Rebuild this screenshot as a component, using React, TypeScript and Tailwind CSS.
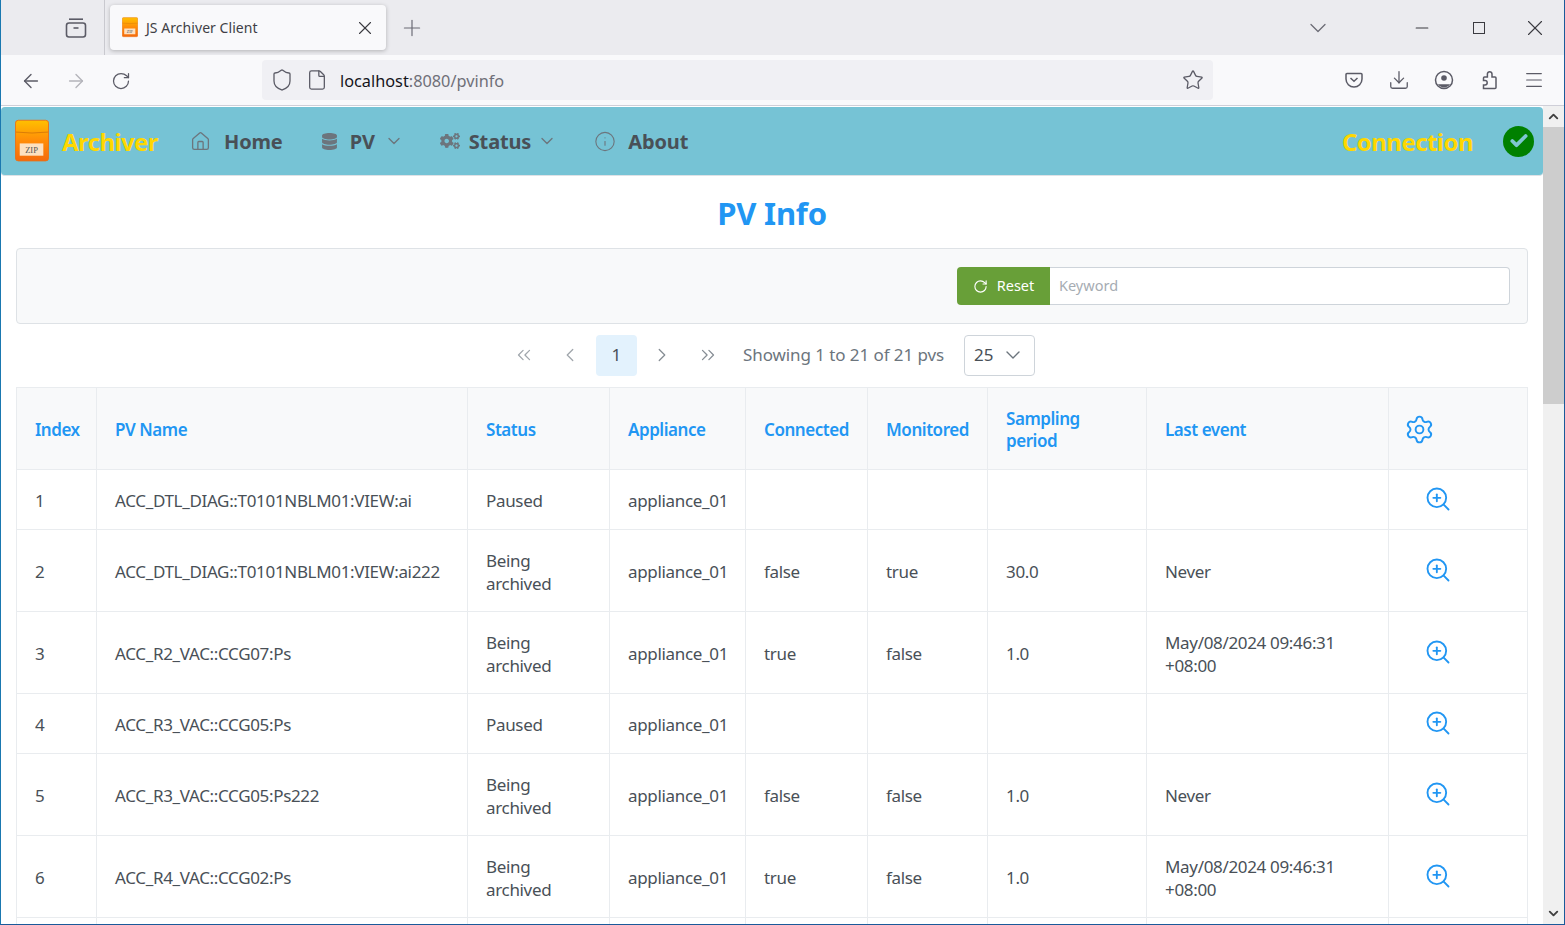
import React from "react";
import { ArrowLeft, ArrowRight, RotateCw, Shield, File, Star, Download, Menu, X, Plus, ChevronDown, Minus, ChevronsLeft, ChevronLeft, ChevronRight, ChevronsRight, Settings, ZoomIn, Home, Info, Check, ChevronUp } from "lucide-react";
import { FaCogs, FaDatabase } from "react-icons/fa";

function Logo({ size }: { size: number }) {
  return (
    <svg width={size} height={size * 1.27} viewBox="0 0 36 44">
      <defs>
        <linearGradient id={"g" + size} x1="0" y1="0" x2="0" y2="1">
          <stop offset="0" stopColor="#ffc000" />
          <stop offset="0.5" stopColor="#ff8c08" />
          <stop offset="1" stopColor="#f46a0c" />
        </linearGradient>
      </defs>
      <rect x="0.5" y="0.5" width="35" height="43" rx="3" fill={"url(#g" + size + ")"} stroke="#e8731a" />
      <path d="M1 13 Q18 15 35 13" stroke="#d87a08" fill="none" />
      <rect x="5" y="25" width="25" height="13" fill="#fde0c0" />
      <text x="17.5" y="35" textAnchor="middle" fontSize="9" fontFamily="Liberation Serif, serif" fill="#555">ZIP</text>
    </svg>
  );
}

const rows = [
  ["1", "ACC_DTL_DIAG::T0101NBLM01:VIEW:ai", "Paused", "appliance_01", "", "", "", ""],
  ["2", "ACC_DTL_DIAG::T0101NBLM01:VIEW:ai222", "Being archived", "appliance_01", "false", "true", "30.0", "Never"],
  ["3", "ACC_R2_VAC::CCG07:Ps", "Being archived", "appliance_01", "true", "false", "1.0", "May/08/2024 09:46:31 +08:00"],
  ["4", "ACC_R3_VAC::CCG05:Ps", "Paused", "appliance_01", "", "", "", ""],
  ["5", "ACC_R3_VAC::CCG05:Ps222", "Being archived", "appliance_01", "false", "false", "1.0", "Never"],
  ["6", "ACC_R4_VAC::CCG02:Ps", "Being archived", "appliance_01", "true", "false", "1.0", "May/08/2024 09:46:31 +08:00"],
];

const heads = ["Index", "PV Name", "Status", "Appliance", "Connected", "Monitored", "Sampling period", "Last event"];
const widths = [80, 371, 142, 136, 122, 120, 159, 242, 139];

function NavItem({ icon, label, caret, gap, textGap }: { icon: React.ReactNode; label: string; caret?: string; gap: string; textGap: string }) {
  return (
    <div className={"flex items-center text-[#495057] " + gap}>
      <span className="text-[#6c757d] flex w-[22px] justify-center">{icon}</span>
      <span className={"text-[20px] font-bold leading-none tracking-[-0.15px] translate-y-[1px] " + textGap}>{label}</span>
      {caret && <ChevronDown size={20} strokeWidth={1.6} className={"text-[#6c757d] " + caret} />}
    </div>
  );
}

export default function App() {
  return (
    <div className="w-[1565px] h-[925px] overflow-hidden flex flex-col border-l border-l-[#1a78b0] border-r border-r-[#1a5a9a] border-b border-b-[#1a5a9a] bg-white text-[#495057] font-['Noto_Sans','Open_Sans',sans-serif]">
      <div className="h-[55px] bg-[#ebebef] flex items-center shrink-0">
        <div className="w-[104px] h-full flex items-center justify-end pr-[17px] border-r border-r-[#c9c9cf]">
          <svg width="22" height="20" viewBox="0 0 22 20" fill="none" stroke="#5b5b66" strokeWidth="1.6">
            <path d="M4 1.2h14" />
            <rect x="1.5" y="5" width="19" height="14" rx="2.5" />
            <path d="M8.5 10h5" />
          </svg>
        </div>
        <div className="ml-[5px] w-[276px] h-[45px] bg-[#f9f9fb] rounded-[4px] shadow-[0_1px_4px_rgba(0,0,0,0.25)] flex items-center pl-[12px] pr-[10px]">
          <Logo size={16} />
          <span className="ml-[8px] text-[14px] text-[#3f3f46] flex-1 tracking-[0.05px]">JS Archiver Client</span>
          <X size={22} strokeWidth={1.2} className="text-[#3a3a40]" />
        </div>
        <Plus size={26} strokeWidth={1.1} className="ml-[13px] text-[#6b6b75]" />
        <div className="flex-1" />
        <ChevronDown size={28} strokeWidth={1.1} className="text-[#6b6b75] mr-[80px]" />
        <Minus size={20} strokeWidth={1.3} className="text-[#3a3a40] mr-[41px]" />
        <div className="w-[12px] h-[12px] border border-[#3a3a40] mr-[37px]" />
        <X size={26} strokeWidth={1} className="text-[#3a3a40] mr-[16px]" />
      </div>
      <div className="h-[51px] bg-[#f9f9fb] border-b border-b-[#cfcfd8] flex items-center shrink-0 text-[#5b5b66]">
        <ArrowLeft size={22} strokeWidth={1.5} className="ml-[19px] translate-y-[1px]" />
        <ArrowRight size={22} strokeWidth={1.5} className="ml-[23px] text-[#b4b4ba] translate-y-[1px]" />
        <RotateCw size={20} strokeWidth={1.5} className="ml-[24px] translate-y-[1px]" />
        <div className="ml-[131px] w-[951px] h-[40px] bg-[#f0f0f4] rounded-[4px] flex items-center pl-[8px] pr-[8px]">
          <Shield size={24} strokeWidth={1.3} />
          <File size={22} strokeWidth={1.4} className="ml-[12px]" />
          <span className="ml-[12px] text-[16.3px] text-[#15141a] translate-y-[1px]">localhost<span className="text-[#6f6f78]">:8080/pvinfo</span></span>
          <div className="flex-1" />
          <Star size={22} strokeWidth={1.4} className="mr-[1px]" />
        </div>
        <svg className="ml-[131px]" width="20" height="20" viewBox="0 0 20 20" fill="none" stroke="currentColor" strokeWidth="1.5"><path d="M3 3.5h14a1 1 0 0 1 1 1V9a8 8 0 0 1-16 0V4.5a1 1 0 0 1 1-1z" /><path d="M6.5 8 10 11.2 13.5 8" /></svg>
        <Download size={22} strokeWidth={1.4} className="ml-[24px]" />
        <svg className="ml-[24px]" width="20" height="20" viewBox="0 0 20 20" fill="none" stroke="currentColor" strokeWidth="1.5">
          <circle cx="10" cy="10" r="8.5" />
          <circle cx="10" cy="8" r="2.8" fill="currentColor" stroke="none" />
          <path d="M3.8 14.2h12.4a7.6 7.6 0 0 1-12.4 0z" fill="currentColor" stroke="none" />
        </svg>
        <svg className="ml-[26px]" width="20" height="20" viewBox="0 0 20 20" fill="none" stroke="currentColor" strokeWidth="1.5">
          <path d="M3.5 18.5H15a1 1 0 0 0 1-1V8a1 1 0 0 0-1-1h-3V4a2.3 2.3 0 0 0-4.6 0v3H4.5a1 1 0 0 0-1 1v2.5H5a2.2 2.2 0 0 1 0 4.4H3.5z" />
        </svg>
        <Menu size={22} strokeWidth={1.3} className="ml-[23px]" />
      </div>
      <div className="flex-1 min-h-0 flex">
        <div className="flex-1 min-w-0 overflow-hidden">
          <div className="h-[69px] mt-[1px] bg-[#76c3d5] rounded-[4px] border-b border-b-[#dee2e6] flex items-center pl-[14px] pr-[9px]">
            <Logo size={34} />
            <span className="ml-[13px] text-[24px] font-bold text-[#ffd700] tracking-[-0.6px] translate-y-[1px]">Archiver</span>
            <NavItem gap="ml-[32px]" textGap="ml-[12px]" icon={<Home size={21} strokeWidth={1.5} />} label="Home" />
            <NavItem gap="ml-[36px]" textGap="ml-[9px]" caret="ml-[9px]" icon={<FaDatabase size={17} />} label="PV" />
            <NavItem gap="ml-[35px]" textGap="ml-[8px]" caret="ml-[6px]" icon={<FaCogs size={20} />} label="Status" />
            <NavItem gap="ml-[37px]" textGap="ml-[12px]" icon={<Info size={25} strokeWidth={1.2} />} label="About" />
            <div className="flex-1" />
            <span className="text-[24px] font-bold text-[#ffd700] tracking-[-0.55px] translate-y-[1px]">Connection</span>
            <span className="ml-[30px] w-[31px] h-[31px] rounded-full bg-[#008000] flex items-center justify-center">
              <Check size={20} strokeWidth={4.5} className="text-[#7fc6d0]" />
            </span>
          </div>
          <h1 className="text-[31px] font-bold text-[#2196f3] text-center leading-none mt-[22px] mb-[19px] tracking-[-0.2px]">PV Info</h1>
          <div className="mx-[15px] h-[76px] bg-[#f8f9fa] border border-[#dee2e6] rounded-[4px] flex items-center justify-end pr-[17px]">
            <button className="w-[93px] h-[38px] bg-[#689f38] text-white rounded-l-[4px] flex items-center justify-center text-[14.5px] gap-[9px]">
              <RotateCw size={15} strokeWidth={1.8} />
              Reset
            </button>
            <div className="w-[460px] h-[38px] bg-white border border-[#ced4da] border-l-0 rounded-r-[4px] flex items-center pl-[9px] text-[14.5px] text-[#a6acb3]">Keyword</div>
          </div>
          <div className="h-[63px] flex items-center justify-center pl-[4px] pb-[1px]">
            <ChevronsLeft size={22} strokeWidth={1.4} className="text-[#a0a6ac]" />
            <ChevronLeft size={22} strokeWidth={1.4} className="text-[#a0a6ac] ml-[24px]" />
            <div className="ml-[15px] w-[41px] h-[41px] rounded-[4px] bg-[#e3f2fd] flex items-center justify-center text-[17px]">1</div>
            <ChevronRight size={22} strokeWidth={1.4} className="text-[#868d94] ml-[14px]" />
            <ChevronsRight size={22} strokeWidth={1.4} className="text-[#868d94] ml-[24px]" />
            <span className="ml-[24px] text-[17px] text-[#6c757d] tracking-[-0.08px]">Showing 1 to 21 of 21 pvs</span>
            <div className="ml-[20px] w-[71px] h-[41px] border border-[#ced4da] rounded-[4px] flex items-center pl-[9px] text-[17px]">
              25
              <ChevronDown size={24} strokeWidth={1.4} className="ml-[7px] text-[#6c757d]" />
            </div>
          </div>
          <div className="mx-[15px]">
            <table className="w-[1511px] table-fixed border-collapse text-[17px] leading-[23px] tracking-[-0.33px]">
              <colgroup>
                {widths.map((w, i) => (
                  <col key={i} style={{ width: w }} />
                ))}
              </colgroup>
              <thead>
                <tr className="h-[82px] bg-[#f8f9fa]">
                  {heads.map((h, i) => (
                    <th key={i} className="border border-[#e9ecef] px-[18px] text-left align-middle font-semibold text-[#2196f3] leading-[22px] tracking-[-0.45px]">
                      <span className="relative top-[1px]">{h}</span>
                    </th>
                  ))}
                  <th className="border border-[#e9ecef] pl-[15px] text-left align-middle">
                    <Settings size={31} strokeWidth={1.5} className="text-[#2196f3] mt-[1px]" />
                  </th>
                </tr>
              </thead>
              <tbody>
                {rows.map((r) => (
                  <tr key={r[0]} className={r[4] ? "h-[82px]" : "h-[60px]"}>
                    {r.map((c, i) => (
                      <td key={i} className="border border-[#e9ecef] px-[18px] align-middle">
                        <span className="relative top-[1px]">{c}</span>
                      </td>
                    ))}
                    <td className="border border-[#e9ecef] pl-[35px] align-middle">
                      <ZoomIn size={28} strokeWidth={1.6} className="text-[#2196f3] -mt-[1px]" />
                    </td>
                  </tr>
                ))}
                <tr className="h-[60px]">
                  {widths.map((_, i) => (
                    <td key={i} className="border border-[#e9ecef]" />
                  ))}
                </tr>
              </tbody>
            </table>
          </div>
        </div>
        <div className="w-[21px] shrink-0 bg-[#f0f0f0] flex flex-col">
          <div className="h-[21px] flex items-center justify-center">
            <ChevronUp size={15} strokeWidth={3} className="text-[#404040]" />
          </div>
          <div className="h-[277px] bg-[#cdcdcd]" />
          <div className="flex-1" />
          <div className="h-[21px] flex items-center justify-center">
            <ChevronDown size={15} strokeWidth={3} className="text-[#404040]" />
          </div>
        </div>
      </div>
    </div>
  );
}
